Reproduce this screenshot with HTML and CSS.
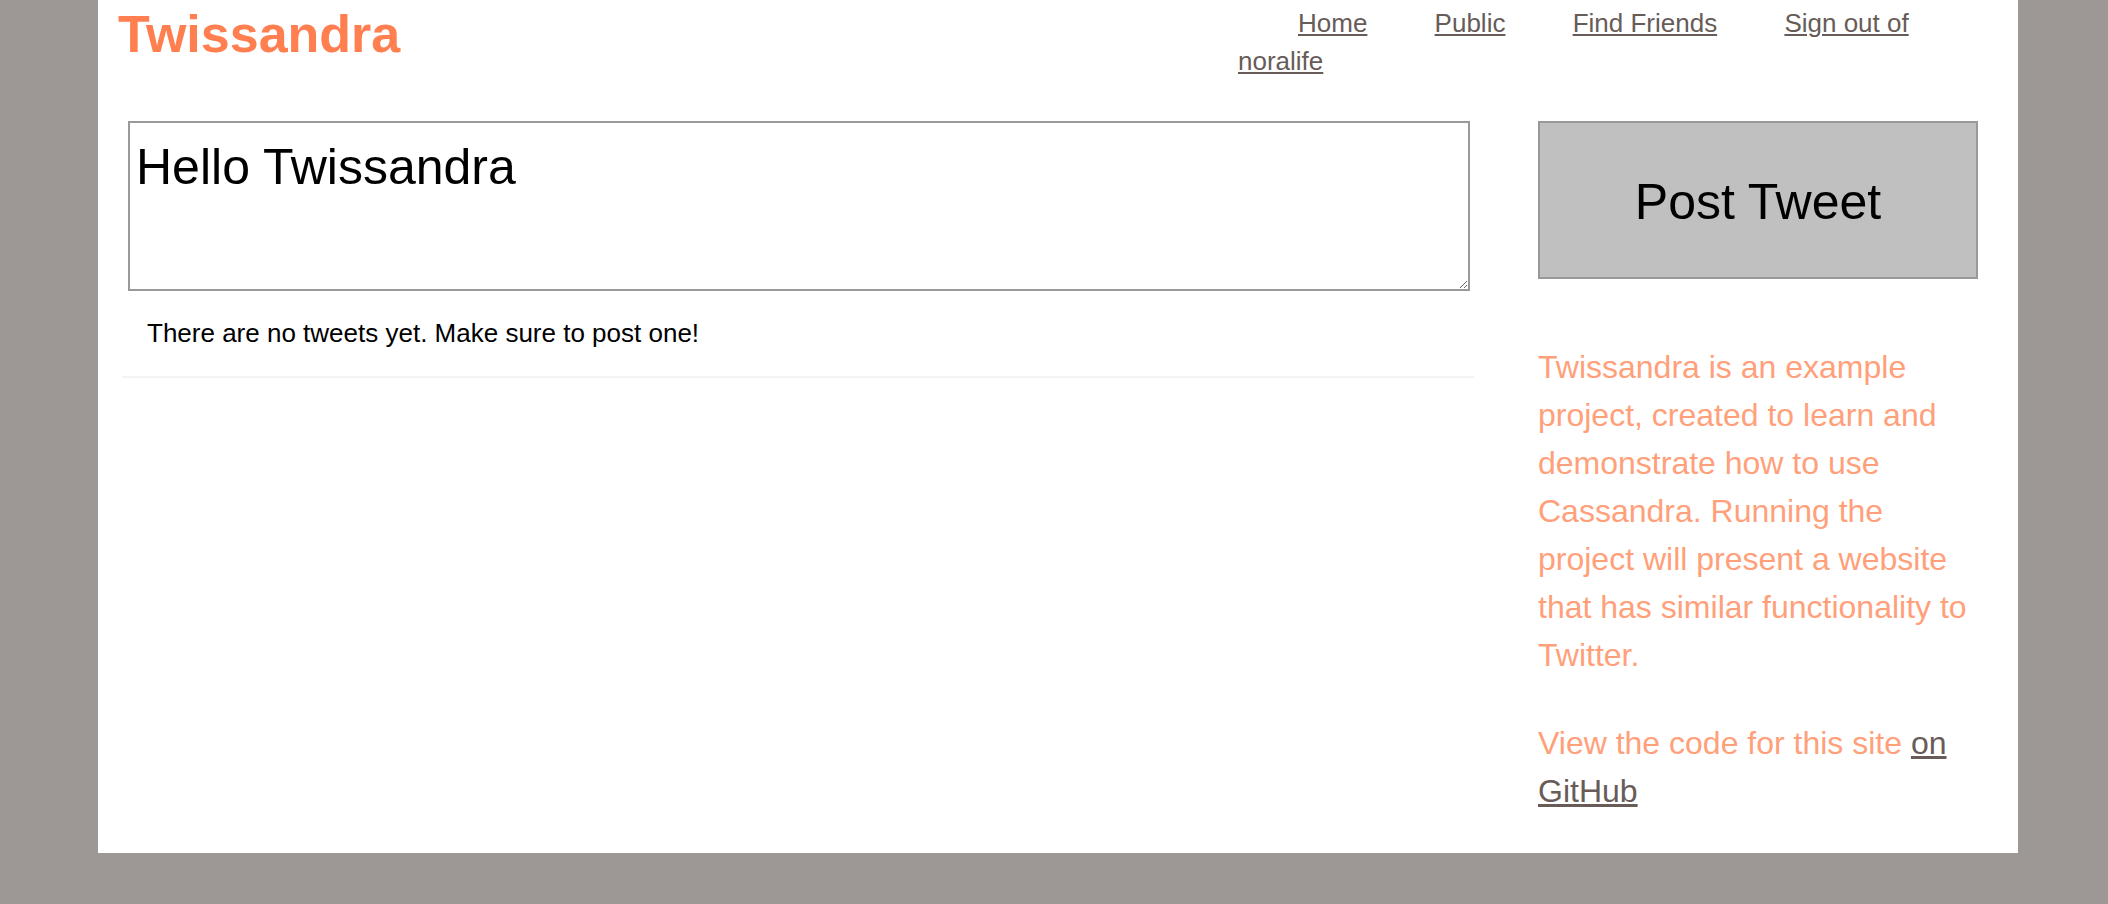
FILE: index.html
```html
<!DOCTYPE html>
<html lang="en">
<head>
  <meta charset="UTF-8" />
  <title>Twissandra</title>
  <link rel="stylesheet" href="styles.css">
</head>
<body>
  <div class="page">
    <!-- header -->
    <div class="header">
      <h1 class="logo">Twissandra</h1>
      <ul class="nav">
        <li><a href="#">Home</a></li>
        <li><a href="#">Public</a></li>
        <li><a href="#">Find Friends</a></li>
        <li><a href="#"><span>Sign out of</span> <span>noralife</span></a></li>
      </ul>
    </div>

    <div class="main">
      <div class="content">
        <form class="post-form">
          <textarea class="tweet-box" name="body">Hello Twissandra</textarea>
        </form>
        <ul class="timeline">
          <li class="tweet">There are no tweets yet. Make sure to post one!</li>
        </ul>
      </div>

      <div class="sidebar">
        <button class="post-btn" type="button">Post Tweet</button>
        <div class="about">
          <p>Twissandra is an example project, created to learn and demonstrate how to use Cassandra. Running the project will present a website that has similar functionality to Twitter.</p>
          <p>View the code for this site <a href="#"><span>on</span> <span>GitHub</span></a></p>
        </div>
      </div>
    </div>
  </div>
</body>
</html>
```

FILE: styles.css
```css
html, body {
  margin: 0;
  padding: 0;
  background: #9d9895;
  font-family: "Liberation Sans", Arial, Helvetica, sans-serif;
}

a {
  color: #675c58;
  text-decoration: underline;
}

.page {
  width: 1920px;
  margin-left: 98px;
  background: #fff;
}

/* header */
.header {
  display: flex;
  justify-content: space-between;
  align-items: flex-start;
  padding: 4px 40px 0 20px;
}

.logo {
  margin: 0;
  font-size: 52px;
  line-height: 60px;
  font-weight: bold;
  color: #ff7f50;
}

.nav {
  width: 740px;
  margin: 0;
  padding: 0;
  list-style: none;
  font-size: 26px;
  line-height: 38px;
}

.nav li {
  display: inline;
  margin-left: 60px;
}

/* main */
.main {
  display: flex;
  gap: 64px;
  padding: 41px 40px 0 24px;
}

.content {
  width: 1352px;
}

.post-form {
  margin: 0;
}

.tweet-box {
  display: block;
  box-sizing: border-box;
  width: 1342px;
  height: 170px;
  margin: 0 0 0 6px;
  padding: 15px 6px;
  border: 2px solid #999;
  border-radius: 0;
  font-family: "Liberation Sans", Arial, Helvetica, sans-serif;
  font-size: 50px;
  color: #000;
  background: #fff;
  outline: none;
}

.timeline {
  margin: 0;
  padding: 0;
  list-style: none;
}

.tweet {
  padding: 27px 25px;
  font-size: 26px;
  line-height: 31px;
  color: #000;
  border-bottom: 2px solid #f4f4f4;
}

.sidebar {
  width: 440px;
}

.post-btn {
  display: block;
  box-sizing: border-box;
  width: 440px;
  height: 158px;
  padding: 4px 0 0;
  border: 2px solid #999;
  border-radius: 0;
  background: #c0c0c0;
  color: #000;
  font-family: "Liberation Sans", Arial, Helvetica, sans-serif;
  font-size: 50px;
}

.about {
  margin-top: 64px;
  padding-bottom: 38px;
  font-size: 32px;
  line-height: 48px;
  color: #ffa07a;
}

.about p {
  margin: 0 0 40px;
}

.about p:last-child {
  margin-bottom: 0;
}
```
